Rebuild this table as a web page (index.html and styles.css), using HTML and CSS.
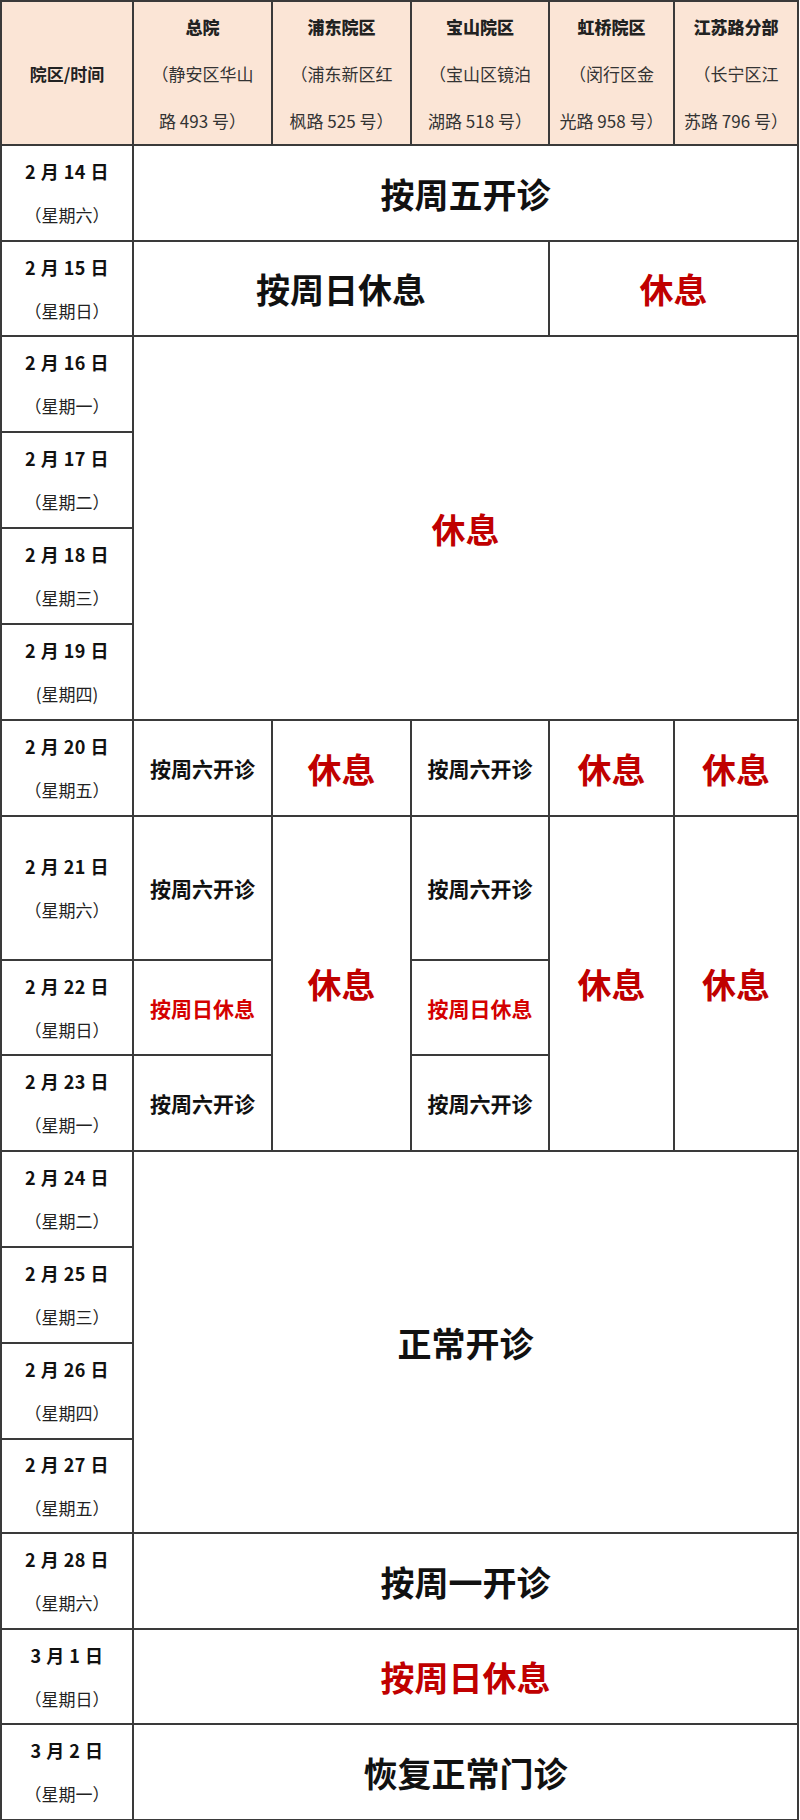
FILE: index.html
```html
<!DOCTYPE html>
<html lang="zh-CN">
<head>
<meta charset="utf-8">
<title>春节门诊安排</title>
<link rel="stylesheet" href="styles.css">
</head>
<body>
<table class="sched">
  <colgroup>
    <col class="c0"><col class="c1"><col class="c2"><col class="c3"><col class="c4"><col class="c5">
  </colgroup>
  <thead>
    <tr class="head">
      <th class="hcorner">院区/时间</th>
      <th><b>总院</b><br><span class="addr">（静安区华山<br>路 493 号）</span></th>
      <th><b>浦东院区</b><br><span class="addr">（浦东新区红<br>枫路 525 号）</span></th>
      <th><b>宝山院区</b><br><span class="addr">（宝山区镜泊<br>湖路 518 号）</span></th>
      <th><b>虹桥院区</b><br><span class="addr">（闵行区金<br>光路 958 号）</span></th>
      <th><b>江苏路分部</b><br><span class="addr">（长宁区江<br>苏路 796 号）</span></th>
    </tr>
  </thead>
  <tbody>
    <tr class="h96">
      <td class="date"><b>2 月 14 日</b><br>（星期六）</td>
      <td colspan="5" class="big">按周五开诊</td>
    </tr>
    <tr class="h95">
      <td class="date"><b>2 月 15 日</b><br>（星期日）</td>
      <td colspan="3" class="big">按周日休息</td>
      <td colspan="2" class="big red">休息</td>
    </tr>
    <tr class="h96">
      <td class="date"><b>2 月 16 日</b><br>（星期一）</td>
      <td colspan="5" rowspan="4" class="big red">休息</td>
    </tr>
    <tr class="h96">
      <td class="date"><b>2 月 17 日</b><br>（星期二）</td>
    </tr>
    <tr class="h96">
      <td class="date"><b>2 月 18 日</b><br>（星期三）</td>
    </tr>
    <tr class="h96">
      <td class="date"><b>2 月 19 日</b><br>(星期四)</td>
    </tr>
    <tr class="h96">
      <td class="date"><b>2 月 20 日</b><br>（星期五）</td>
      <td class="small">按周六开诊</td>
      <td class="big red">休息</td>
      <td class="small">按周六开诊</td>
      <td class="big red">休息</td>
      <td class="big red">休息</td>
    </tr>
    <tr class="h144">
      <td class="date"><b>2 月 21 日</b><br>（星期六）</td>
      <td class="small">按周六开诊</td>
      <td rowspan="3" class="big red">休息</td>
      <td class="small">按周六开诊</td>
      <td rowspan="3" class="big red">休息</td>
      <td rowspan="3" class="big red">休息</td>
    </tr>
    <tr class="h95">
      <td class="date"><b>2 月 22 日</b><br>（星期日）</td>
      <td class="small red2">按周日休息</td>
      <td class="small red2">按周日休息</td>
    </tr>
    <tr class="h96">
      <td class="date"><b>2 月 23 日</b><br>（星期一）</td>
      <td class="small">按周六开诊</td>
      <td class="small">按周六开诊</td>
    </tr>
    <tr class="h96">
      <td class="date"><b>2 月 24 日</b><br>（星期二）</td>
      <td colspan="5" rowspan="4" class="big">正常开诊</td>
    </tr>
    <tr class="h96">
      <td class="date"><b>2 月 25 日</b><br>（星期三）</td>
    </tr>
    <tr class="h96">
      <td class="date"><b>2 月 26 日</b><br>（星期四）</td>
    </tr>
    <tr class="h94">
      <td class="date"><b>2 月 27 日</b><br>（星期五）</td>
    </tr>
    <tr class="h96">
      <td class="date"><b>2 月 28 日</b><br>（星期六）</td>
      <td colspan="5" class="big">按周一开诊</td>
    </tr>
    <tr class="h95">
      <td class="date"><b>3 月 1 日</b><br>（星期日）</td>
      <td colspan="5" class="big red">按周日休息</td>
    </tr>
    <tr class="h96">
      <td class="date"><b>3 月 2 日</b><br>（星期一）</td>
      <td colspan="5" class="big">恢复正常门诊</td>
    </tr>
  </tbody>
</table>
</body>
</html>
```
FILE: styles.css
```css
html, body {
  margin: 0;
  padding: 0;
  background: #ffffff;
}

body {
  font-family: "Noto Sans CJK SC", "Noto Sans", sans-serif;
  color: #1c1c1c;
}

.sched {
  border-collapse: collapse;
  table-layout: fixed;
  width: 799px;
}

.c0 { width: 132px; }
.c1 { width: 139px; }
.c2 { width: 139px; }
.c3 { width: 138px; }
.c4 { width: 125px; }
.c5 { width: 124px; }

.sched th,
.sched td {
  border: 2px solid #3a3a3a;
  padding: 0;
  text-align: center;
  vertical-align: middle;
  overflow: hidden;
  white-space: nowrap;
}

.head { height: 144px; }
.head th {
  background: #fbe5d6;
  font-size: 17px;
  line-height: 47px;
  font-weight: 700;
  color: #222222;
}
.head .addr {
  font-weight: 400;
  color: #333333;
}

.h94 { height: 94px; }
.h95 { height: 95px; }
.h96 { height: 96px; }
.h144 { height: 144px; }

.date {
  font-size: 17px;
  line-height: 43px;
  color: #222222;
}
.date b {
  font-size: 18px;
  font-weight: 700;
  letter-spacing: 0.5px;
  color: #111111;
}

.big {
  font-size: 34px;
  font-weight: 700;
  color: #111111;
}

.small {
  font-size: 21px;
  font-weight: 700;
  color: #111111;
}

.red { color: #c00000; }
.red2 { color: #d40000; }
```
